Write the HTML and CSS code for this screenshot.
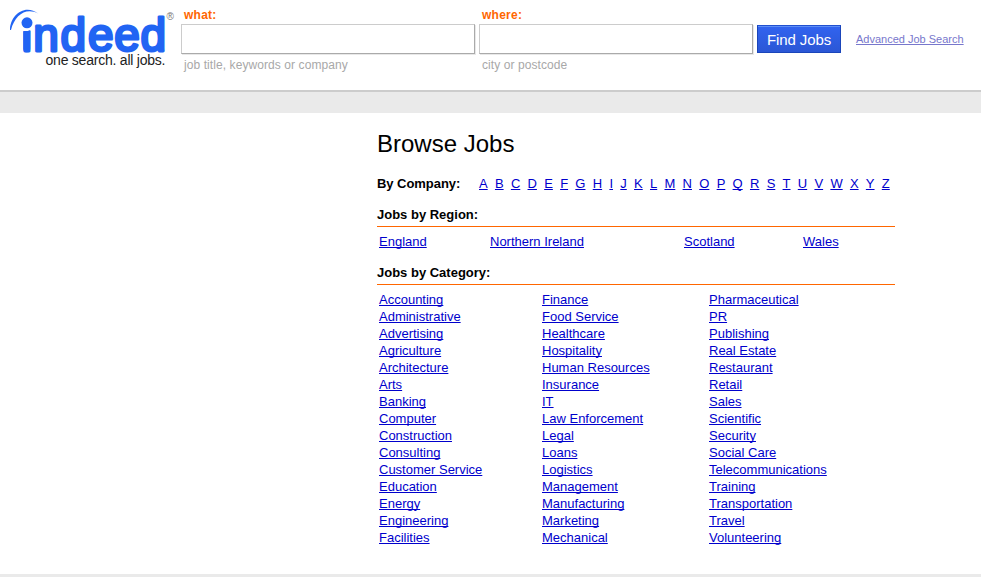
FILE: index.html
```html
<!DOCTYPE html>
<html lang="en">
<head>
<meta charset="utf-8">
<title>Browse Jobs | Indeed</title>
<link rel="stylesheet" href="styles.css">
</head>
<body>
<header class="header">
  <a class="logo">
    <svg width="176" height="72" viewBox="0 0 176 72">
      <text class="logo-name" x="21.7 33.3 60.6 88 114.2 140.6" y="50.6">indeed</text>
      <rect x="20" y="12" width="13" height="19" fill="#fff"/>
      <circle cx="27" cy="22.8" r="5.5" fill="#2164f3"/>
      <path d="M23.2 31.2Q27 31.7 30.3 30V48.7a3.5 3.5 0 0 1-7.1 0Z" fill="#2164f3"/>
      <path d="M10 30C10 15 25 3 38.5 13.8C26 7 15 15 11 30Z" fill="#2164f3"/>
      <text class="logo-mark" x="166.5" y="20">®</text>
      <text class="logo-tag" x="45.5" y="65" textLength="120">one search. all jobs.</text>
    </svg>
  </a>
  <form class="search">
    <label class="field field-what"><span class="label">what:</span><input type="text"><span class="hint">job title, keywords or company</span></label>
    <label class="field field-where"><span class="label">where:</span><input type="text"><span class="hint">city or postcode</span></label>
    <button class="find" type="button">Find Jobs</button>
    <a class="advanced" href="#">Advanced Job Search</a>
  </form>
</header>
<div class="band"></div>
<main class="browse">
  <h1>Browse Jobs</h1>
  <div class="company"><b>By Company:</b>
    <nav class="letters"><a href="#">A</a><a href="#">B</a><a href="#">C</a><a href="#">D</a><a href="#">E</a><a href="#">F</a><a href="#">G</a><a href="#">H</a><a href="#">I</a><a href="#">J</a><a href="#">K</a><a href="#">L</a><a href="#">M</a><a href="#">N</a><a href="#">O</a><a href="#">P</a><a href="#">Q</a><a href="#">R</a><a href="#">S</a><a href="#">T</a><a href="#">U</a><a href="#">V</a><a href="#">W</a><a href="#">X</a><a href="#">Y</a><a href="#">Z</a></nav>
  </div>
  <h2>Jobs by Region:</h2>
  <div class="regions"><a href="#">England</a><a href="#">Northern Ireland</a><a href="#">Scotland</a><a href="#">Wales</a></div>
  <h2>Jobs by Category:</h2>
  <div class="categories">
    <ul>
      <li><a href="#">Accounting</a></li><li><a href="#">Administrative</a></li><li><a href="#">Advertising</a></li><li><a href="#">Agriculture</a></li><li><a href="#">Architecture</a></li>
      <li><a href="#">Arts</a></li><li><a href="#">Banking</a></li><li><a href="#">Computer</a></li><li><a href="#">Construction</a></li><li><a href="#">Consulting</a></li>
      <li><a href="#">Customer Service</a></li><li><a href="#">Education</a></li><li><a href="#">Energy</a></li><li><a href="#">Engineering</a></li><li><a href="#">Facilities</a></li>
    </ul>
    <ul>
      <li><a href="#">Finance</a></li><li><a href="#">Food Service</a></li><li><a href="#">Healthcare</a></li><li><a href="#">Hospitality</a></li><li><a href="#">Human Resources</a></li>
      <li><a href="#">Insurance</a></li><li><a href="#">IT</a></li><li><a href="#">Law Enforcement</a></li><li><a href="#">Legal</a></li><li><a href="#">Loans</a></li>
      <li><a href="#">Logistics</a></li><li><a href="#">Management</a></li><li><a href="#">Manufacturing</a></li><li><a href="#">Marketing</a></li><li><a href="#">Mechanical</a></li>
    </ul>
    <ul>
      <li><a href="#">Pharmaceutical</a></li><li><a href="#">PR</a></li><li><a href="#">Publishing</a></li><li><a href="#">Real Estate</a></li><li><a href="#">Restaurant</a></li>
      <li><a href="#">Retail</a></li><li><a href="#">Sales</a></li><li><a href="#">Scientific</a></li><li><a href="#">Security</a></li><li><a href="#">Social Care</a></li>
      <li><a href="#">Telecommunications</a></li><li><a href="#">Training</a></li><li><a href="#">Transportation</a></li><li><a href="#">Travel</a></li><li><a href="#">Volunteering</a></li>
    </ul>
  </div>
</main>
<footer class="footer"></footer>
</body>
</html>
```
FILE: styles.css
```css
* { box-sizing: border-box; }
body { margin: 0; height: 577px; overflow: hidden; display: flex; flex-direction: column; background: #fff; color: #000; font: 13px/17px "Liberation Sans", Arial, sans-serif; }
a { color: #00c; text-underline-offset: 1px; text-decoration-thickness: 1px; text-decoration-skip-ink: none; }
.header { display: flex; height: 90px; flex: none; }
.logo { width: 181px; }
.logo svg { display: block; }
.logo-name { font: 46px "Liberation Sans", Arial, sans-serif; fill: #2164f3; stroke: #2164f3; stroke-width: 2.8px; stroke-linejoin: round; }
.logo-mark { font: 10px "Liberation Sans", Arial, sans-serif; fill: #777; }
.logo-tag { font: 14px "Liberation Sans", Arial, sans-serif; fill: #222; }
.search { display: flex; align-items: flex-start; padding-top: 7px; }
.field { display: flex; flex-direction: column; margin-right: 4px; font-size: 12px; }
.field-what { width: 294px; }
.field-where { width: 274px; }
.label { padding-left: 3px; line-height: 16px; color: #f60; font-weight: bold; letter-spacing: .25px; }
.field input { width: 100%; height: 30px; margin: 1px 0 3px; border: 1px solid; border-color: #ccc #aaa #aaa #ccc; box-shadow: 1px 1px 0 #e8e8e8; background: #fff; }
.hint { padding-left: 3px; line-height: 16px; color: #a8a8a8; letter-spacing: .08px; }
.find { width: 84px; height: 28px; margin: 18px 15px 0 0; padding: 1px 0 0; border: 1px solid #1a45ba; border-top-color: #2150d0; box-shadow: inset 0 1px 0 #5e8ff5; background: linear-gradient(#3163f0, #2b57d5); color: #fff; font: 15px "Liberation Sans", Arial, sans-serif; letter-spacing: -.1px; }
.advanced { margin-top: 24px; color: #77c; font-size: 11px; }
.band { height: 23px; flex: none; border-top: 2px solid #ccc; background: #eaeaea; }
.browse { width: 518px; margin-left: 377px; flex: 1; }
h1 { margin: 17px 0 18px; font-size: 24px; line-height: 27px; font-weight: normal; }
.company { display: flex; height: 17px; }
.company b { width: 102px; letter-spacing: -.05px; }
.letters { display: flex; gap: 7.28px; }
h2 { margin: 14px 0 6px; padding-bottom: 3px; border-bottom: 1px solid #f60; font-size: 13px; line-height: 17px; }
.regions { display: grid; grid-template-columns: 111px 194px 119px 1fr; padding-left: 2px; justify-items: start; }
.categories { display: grid; grid-template-columns: 163px 167px 1fr; padding-left: 2px; }
ul { margin: 0; padding: 0; list-style: none; }
.footer { height: 3px; flex: none; background: #eaeaea; }
```
